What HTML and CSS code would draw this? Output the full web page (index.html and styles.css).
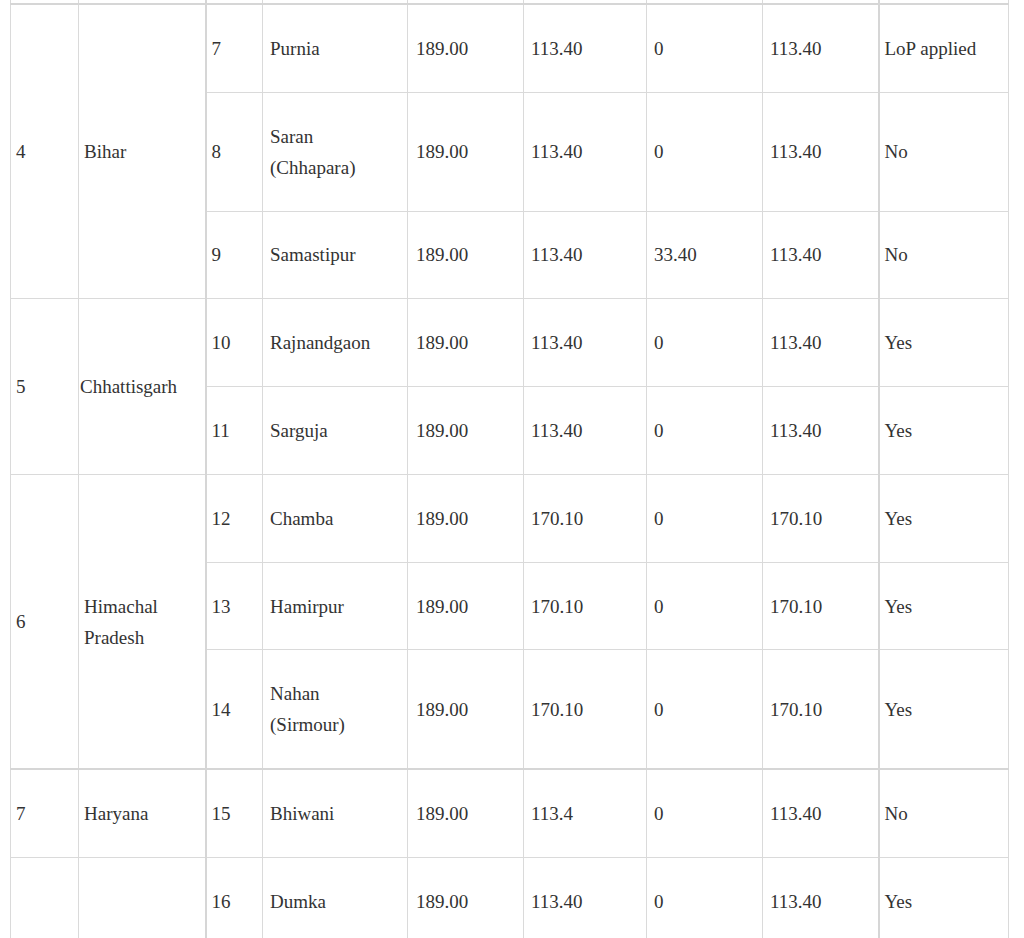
FILE: index.html
```html
<!DOCTYPE html>
<html lang="en">
<head>
<meta charset="utf-8">
<title>Districts table</title>
<link rel="stylesheet" href="styles.css">
</head>
<body>
<div class="wrap">
<table class="grid">
  <colgroup>
    <col class="c1"><col class="c2"><col class="c3"><col class="c4"><col class="c5"><col class="c6"><col class="c7"><col class="c8"><col class="c9">
  </colgroup>
  <tbody>
    <tr class="stub">
      <td></td><td></td><td class="sep"></td><td></td><td></td><td></td><td></td><td></td><td class="sep"></td>
    </tr>
    <tr class="group">
      <td rowspan="3" class="lead">4</td><td rowspan="3" class="lead">Bihar</td>
      <td class="sep">7</td><td>Purnia</td><td class="num">189.00</td><td>113.40</td><td>0</td><td>113.40</td><td class="sep">LoP applied</td>
    </tr>
    <tr>
      <td class="sep">8</td><td>Saran<br>(Chhapara)</td><td class="num">189.00</td><td>113.40</td><td>0</td><td>113.40</td><td class="sep">No</td>
    </tr>
    <tr>
      <td class="sep">9</td><td>Samastipur</td><td class="num">189.00</td><td>113.40</td><td>33.40</td><td>113.40</td><td class="sep">No</td>
    </tr>
    <tr>
      <td rowspan="2" class="lead">5</td><td rowspan="2" class="tight">Chhattisgarh</td>
      <td class="sep">10</td><td>Rajnandgaon</td><td class="num">189.00</td><td>113.40</td><td>0</td><td>113.40</td><td class="sep">Yes</td>
    </tr>
    <tr>
      <td class="sep">11</td><td>Sarguja</td><td class="num">189.00</td><td>113.40</td><td>0</td><td>113.40</td><td class="sep">Yes</td>
    </tr>
    <tr>
      <td rowspan="3" class="lead">6</td><td rowspan="3" class="lead">Himachal<br>Pradesh</td>
      <td class="sep">12</td><td>Chamba</td><td class="num">189.00</td><td>170.10</td><td>0</td><td>170.10</td><td class="sep">Yes</td>
    </tr>
    <tr>
      <td class="sep">13</td><td>Hamirpur</td><td class="num">189.00</td><td>170.10</td><td>0</td><td>170.10</td><td class="sep">Yes</td>
    </tr>
    <tr>
      <td class="sep">14</td><td>Nahan<br>(Sirmour)</td><td class="num">189.00</td><td>170.10</td><td>0</td><td>170.10</td><td class="sep">Yes</td>
    </tr>
    <tr class="group">
      <td class="lead">7</td><td class="lead">Haryana</td>
      <td class="sep">15</td><td>Bhiwani</td><td class="num">189.00</td><td>113.4</td><td>0</td><td>113.40</td><td class="sep">No</td>
    </tr>
    <tr>
      <td class="lead"></td><td class="lead"></td>
      <td class="sep">16</td><td>Dumka</td><td class="num">189.00</td><td>113.40</td><td>0</td><td>113.40</td><td class="sep">Yes</td>
    </tr>
  </tbody>
</table>
</div>
</body>
</html>
```
FILE: styles.css
```css
html {
  overflow: hidden;
  background: #ffffff;
}
body {
  margin: 0;
  background: #ffffff;
}
.wrap {
  padding-left: 10px;
}
.grid {
  border-collapse: collapse;
  table-layout: fixed;
  width: 998px;
  font-family: "Liberation Serif", "DejaVu Serif", serif;
  font-size: 19px;
  line-height: 31px;
  color: #333333;
}
.c1 { width: 68px; }
.c2 { width: 127px; }
.c3 { width: 57px; }
.c4 { width: 145px; }
.c5 { width: 116px; }
.c6 { width: 123px; }
.c7 { width: 116px; }
.c8 { width: 116px; }
.c9 { width: 130px; }
.grid td {
  border: 1px solid #dadada;
  padding: 27.9px 7px;
  vertical-align: middle;
  text-align: left;
}
.grid td.lead {
  padding-left: 5px;
}
.grid td.sep {
  border-left: 2px solid #d6d6d6;
  padding-left: 5px;
}
.grid td.num {
  padding-left: 8px;
}
.grid td.tight {
  padding-left: 1px;
}
.grid tr.stub td {
  padding: 0;
  height: 3px;
  line-height: 0;
  font-size: 0;
  border-top: none;
}
.grid tr.group td {
  border-top: 2px solid #d6d6d6;
}
```
